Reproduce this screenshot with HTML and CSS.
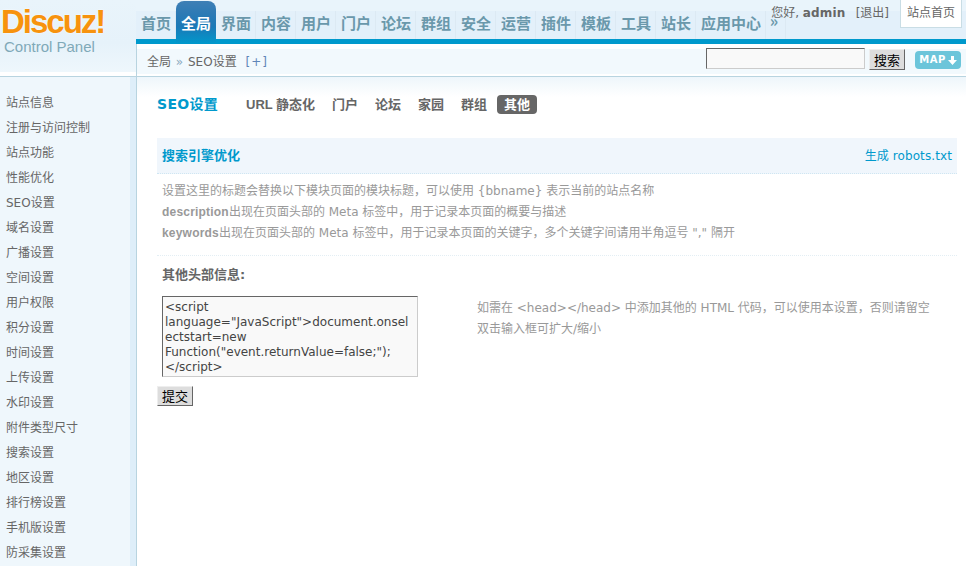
FILE: index.html
```html
<!DOCTYPE html>
<html lang="zh">
<head>
<meta charset="utf-8">
<title>SEO设置</title>
<link rel="stylesheet" href="styles.css">
</head>
<body>
<div class="page">
  <header class="top">
    <div class="logo">
      <div class="logo-mark">Discuz!</div>
      <div class="logo-sub">Control Panel</div>
    </div>
    <div class="top-main">
      <div class="navbar">
        <nav class="nav">
          <a class="nav-item">首页</a>
          <a class="nav-item active">全局</a>
          <a class="nav-item">界面</a>
          <a class="nav-item">内容</a>
          <a class="nav-item">用户</a>
          <a class="nav-item">门户</a>
          <a class="nav-item">论坛</a>
          <a class="nav-item">群组</a>
          <a class="nav-item">安全</a>
          <a class="nav-item">运营</a>
          <a class="nav-item">插件</a>
          <a class="nav-item">模板</a>
          <a class="nav-item">工具</a>
          <a class="nav-item">站长</a>
          <a class="nav-item wide">应用中心</a>
          <a class="nav-item more">»</a>
        </nav>
        <div class="user">
          <span class="hello">您好, <b>admin</b></span>
          <a class="logout">[退出]</a>
          <a class="home">站点首页</a>
        </div>
      </div>
      <div class="crumbbar">
        <div class="crumbs">全局 <span class="sep">»</span> SEO设置 <a class="plus">[+]</a></div>
        <div class="search">
          <input class="search-input" type="text">
          <button class="btn search-btn" type="button">搜索</button>
          <a class="map">MAP<svg class="map-arrow" width="9" height="9" viewBox="0 0 9 9"><path d="M3 0h3v4h3L4.500 9 0 4h3z" fill="#fff"/></svg></a>
        </div>
      </div>
    </div>
  </header>
  <div class="body">
    <aside class="side">
      <ul class="menu">
        <li>站点信息</li>
        <li>注册与访问控制</li>
        <li>站点功能</li>
        <li>性能优化</li>
        <li>SEO设置</li>
        <li>域名设置</li>
        <li>广播设置</li>
        <li>空间设置</li>
        <li>用户权限</li>
        <li>积分设置</li>
        <li>时间设置</li>
        <li>上传设置</li>
        <li>水印设置</li>
        <li>附件类型尺寸</li>
        <li>搜索设置</li>
        <li>地区设置</li>
        <li>排行榜设置</li>
        <li>手机版设置</li>
        <li>防采集设置</li>
      </ul>
    </aside>
    <main class="content">
      <div class="tabs">
        <h1 class="title">SEO设置</h1>
        <a class="tab first">URL 静态化</a>
        <a class="tab">门户</a>
        <a class="tab">论坛</a>
        <a class="tab">家园</a>
        <a class="tab">群组</a>
        <a class="tab current">其他</a>
      </div>
      <div class="section-head">
        <h2 class="section-title">搜索引擎优化</h2>
        <a class="robots">生成 robots.txt</a>
      </div>
      <div class="tips">
        <p>设置这里的标题会替换以下模块页面的模块标题，可以使用 {bbname} 表示当前的站点名称</p>
        <p><b>description</b>出现在页面头部的 Meta 标签中，用于记录本页面的概要与描述</p>
        <p><b>keywords</b>出现在页面头部的 Meta 标签中，用于记录本页面的关键字，多个关键字间请用半角逗号 "," 隔开</p>
      </div>
      <form class="form">
        <div class="label">其他头部信息:</div>
        <div class="field">
          <textarea class="area" rows="5" cols="30">&lt;script language="JavaScript"&gt;document.onselectstart=new Function("event.returnValue=false;");&lt;/script&gt;</textarea>
          <div class="hint">
            <p>如需在 &lt;head&gt;&lt;/head&gt; 中添加其他的 HTML 代码，可以使用本设置，否则请留空</p>
            <p>双击输入框可扩大/缩小</p>
          </div>
        </div>
        <button class="btn submit" type="button">提交</button>
      </form>
    </main>
  </div>
</div>
</body>
</html>
```

FILE: styles.css
```css
* { box-sizing: border-box; }
html, body { margin: 0; padding: 0; height: 100%; overflow: hidden; }
body {
  background: #fff;
  color: #666;
  font: 12px/21px "DejaVu Sans", "Noto Sans CJK SC", sans-serif;
}
p, h1, h2, ul { margin: 0; padding: 0; }
.page { width: 966px; height: 566px; display: flex; flex-direction: column; overflow: hidden; }

.top { display: flex; height: 77px; border-bottom: 1px solid #b8d4e0; position: relative; }
.logo {
  width: 137px;
  height: 72px;
  padding-left: 1px;
  background: linear-gradient(#e9f4fb, #e6f2fa 60%, #eef7fc);
}
.logo-mark {
  font: bold 33px/32px "Liberation Sans", sans-serif;
  color: #f7930e;
  letter-spacing: -2px;
  padding-top: 6px;
  height: 38px;
  text-shadow: 0 0 2px #fff;
}
.logo-sub {
  font: 15px/18px "Liberation Sans", sans-serif;
  color: #7fa9b8;
  padding-left: 3px;
}
.top-main { flex: 1; display: flex; flex-direction: column; margin-left: -1px; }

.navbar {
  position: relative;
  height: 44px;
  padding-top: 11px;
  background: linear-gradient(#e9f4fb 11px, #e3f0fa 11px);
  border-bottom: 5px solid #0099cc;
}
.nav { display: flex; height: 28px; }
.nav-item {
  position: relative;
  width: 40px;
  height: 28px;
  padding-left: 1px;
  border-right: 1px solid #dce9f3;
  color: #6a98ab;
  font: bold 15px/23px "Noto Sans CJK SC", sans-serif;
  text-align: center;
}
.nav-item.wide { width: 70px; }
.nav-item.more { width: 20px; font-size: 16px; line-height: 19px; padding: 0 3px 0 0; }
.nav-item.active {
  height: 43px;
  margin-top: -10px;
  padding: 10px 0 0;
  border-right: 0;
  border-radius: 8px 8px 0 0;
  background: linear-gradient(#3f7fb5, #2c7ab5 30%, #1b79b7 60%, #0099cc);
  color: #fff;
}

.user {
  position: absolute;
  top: 0;
  right: 4px;
  display: flex;
  align-items: flex-start;
  line-height: 27px;
  color: #666;
}
.hello b { font-weight: bold; letter-spacing: .2px; }
.logout { margin-left: 10px; }
.home {
  margin-left: 11px;
  width: 62px;
  height: 28px;
  background: #fff;
  border: 1px solid #c9dde5;
  border-top: 0;
  text-align: center;
}

.crumbbar {
  height: 32px;
  padding: 0 5px 0 10px;
  display: flex;
  justify-content: space-between;
  align-items: center;
  border-left: 1px solid #b8d4e0;
  background: linear-gradient(#fff 5px, #f2f9fd 5px, #f2f9fd 30px, #fff 30px);
}
.crumbs { color: #666; padding-top: 4px; word-spacing: 1px; }
.sep { color: #8aa9c0; }
.plus { color: #5f86b8; margin-left: 4px; letter-spacing: 1px; }
.search { display: flex; align-items: flex-start; align-self: flex-start; padding-top: 4px; }
.search-input {
  width: 159px;
  height: 21px;
  background: #f9f9f9;
  border: 1px solid;
  border-color: #666 #ccc #ccc #666;
  padding: 0;
}
.btn {
  background: #ddd;
  border: 1px solid;
  border-color: #eee #666 #666 #eee;
  padding: 0;
  color: #000;
  font: 13px/18px "Noto Sans CJK SC", sans-serif;
  width: 36px;
  height: 21px;
}
.search-btn { margin-left: 4px; margin-top: 1px; }
.map {
  margin: 3px 0 0 10px;
  width: 46px;
  height: 18px;
  display: flex;
  align-items: center;
  justify-content: center;
  gap: 2px;
  border-radius: 4px;
  background: #6cc5da;
  color: #fff;
  font: bold 10px/18px "DejaVu Sans", sans-serif;
  letter-spacing: .5px;
}
.map-arrow { display: block; }

.body { flex: 1; display: flex; min-height: 0; }
.side {
  width: 137px;
  padding-top: 14px;
  background: linear-gradient(90deg, #eff7fc 130px, #deeef9 130px, #deeef9 136px, #b8d4e0 136px);
}
.menu { list-style: none; padding-left: 6px; }
.menu li { height: 25px; line-height: 25px; color: #666; }

.content {
  flex: 1;
  padding: 0 9px 0 20px;
  background: linear-gradient(#eef6fb, #fff 20px);
}
.tabs { height: 61px; padding-top: 17px; display: flex; align-items: flex-start; }
.title {
  font: bold 14px/21px "DejaVu Sans", "Noto Sans CJK SC", sans-serif;
  color: #0099cc;
  letter-spacing: .3px;
  width: 89px;
}
.tab {
  font: bold 13px/19px "Liberation Sans", "Noto Sans CJK SC", sans-serif;
  color: #666;
  margin-right: 17px;
  margin-top: 1px;
  white-space: nowrap;
}
.tab.first { width: 69px; }
.tab.current {
  margin-left: -7px;
  padding: 0 7px;
  background: #666;
  color: #fff;
  border-radius: 4px;
}
.section-head {
  height: 36px;
  padding: 0 5px;
  display: flex;
  align-items: center;
  justify-content: space-between;
  background: #f0f6fc;
  border-bottom: 1px dotted #cfe6f2;
}
.section-title { font: bold 13px/20px "DejaVu Sans", "Noto Sans CJK SC", sans-serif; color: #0099cc; }
.robots { color: #0099cc; padding-top: 2px; margin-left: auto; letter-spacing: .1px; }
.tips {
  padding: 7px 5px 11px;
  color: #999;
  border-bottom: 1px dotted #e3eef4;
}
.tips b { font-family: "Liberation Sans", "Noto Sans CJK SC", sans-serif; letter-spacing: .2px; }
.form { padding-top: 8px; }
.label { padding-left: 5px; font: bold 13px/21px "DejaVu Sans", "Noto Sans CJK SC", sans-serif; color: #666; }
.field { display: flex; padding: 11px 0 9px 5px; }
.area {
  display: block;
  width: 256px;
  height: 81px;
  padding: 3px 2px 0;
  background: #f9f9f9;
  border: 1px solid;
  border-color: #666 #ccc #ccc #666;
  color: #444;
  font: 12px/15px "DejaVu Sans", sans-serif;
  resize: none;
  overflow: hidden;
}
.hint { margin-left: 59px; padding-top: 2px; color: #999; }
.submit { display: block; height: 20px; }
```
